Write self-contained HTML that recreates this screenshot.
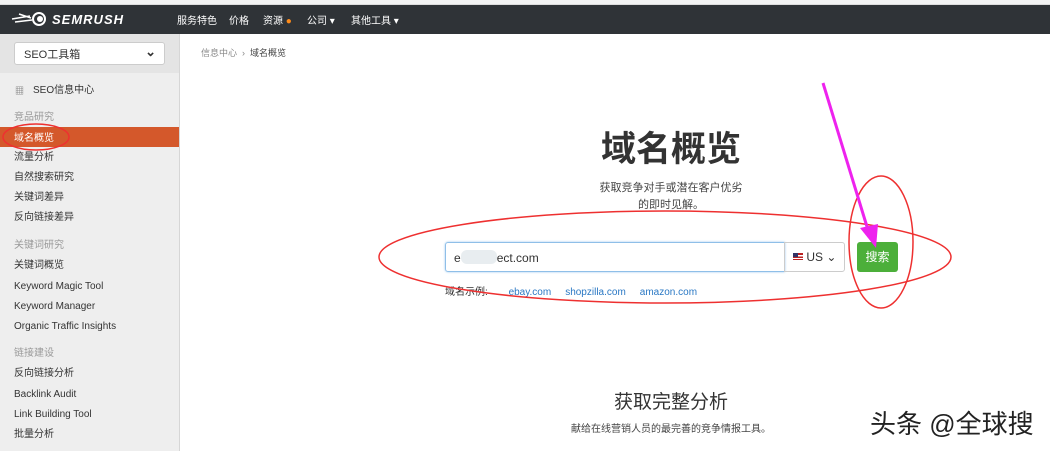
<!DOCTYPE html>
<html><head><meta charset="utf-8"><style>
*{margin:0;padding:0;box-sizing:border-box}
body{width:1050px;height:451px;overflow:hidden;background:#fff;font-family:"Liberation Sans","Noto Sans CJK SC",sans-serif;position:relative;color:#333}
.a{position:absolute;white-space:nowrap}
.top{left:0;top:0;width:1050px;height:5px;background:#f3f3f3;border-bottom:1px solid #ddd}
.hd{left:0;top:5px;width:1050px;height:29px;background:#2f3337}
.nav{top:16px;font-size:10px;line-height:12px;height:12px;color:#fff}
.sb{left:0;top:34px;width:180px;height:417px;background:#eeeeee;border-right:1px solid #d6d6d6}
.sbtop{left:0;top:34px;width:179px;height:39px;background:#e4e4e4}
.it{left:14px;font-size:10px;line-height:12px;height:12px;color:#333}
.gr{left:14px;font-size:10px;line-height:12px;height:12px;color:#999}
</style></head><body>
<div class="a top"></div>
<div class="a hd"></div>
<svg class="a" style="left:10px;top:10px" width="150" height="18">
<path d="M2 9 L20 6 M5 12 L22 10 M9 4 L21 8" stroke="#fff" stroke-width="1.5"/>
<circle cx="29" cy="9" r="6" fill="none" stroke="#fff" stroke-width="2"/><circle cx="30" cy="9" r="3" fill="#fff"/>
<text x="42" y="14" fill="#fff" font-family="Liberation Sans" font-style="italic" font-weight="bold" font-size="13" letter-spacing="1">SEMRUSH</text>
</svg>
<div class="a nav" style="left:177px">服务特色</div>
<div class="a nav" style="left:229px">价格</div>
<div class="a nav" style="left:263px">资源 <span style="color:#ff8c1a">●</span></div>
<div class="a nav" style="left:307px">公司 ▾</div>
<div class="a nav" style="left:351px">其他工具 ▾</div>
<div class="a sb"></div>
<div class="a sbtop"></div>
<div class="a" style="left:14px;top:42px;width:151px;height:23px;background:#fff;border:1px solid #ccc;border-radius:3px;font-size:11px;line-height:13px;padding:6px 9px 0;color:#333">SEO工具箱<span style="position:absolute;right:8px;top:2px;font-size:13px;font-weight:bold">⌄</span></div>
<div class="a it" style="left:15px;top:85px;font-size:9px;color:#777;letter-spacing:-1px">▦</div>
<div class="a it" style="left:33px;top:85px">SEO信息中心</div>
<div class="a gr" style="top:112px">竞品研究</div>
<div class="a" style="left:0;top:127px;width:179px;height:20px;background:#d4582b"></div>
<div class="a it" style="top:133px;color:#fff">域名概览</div>
<div class="a it" style="top:152px">流量分析</div>
<div class="a it" style="top:172px">自然搜索研究</div>
<div class="a it" style="top:192px">关键词差异</div>
<div class="a it" style="top:212px">反向链接差异</div>
<div class="a gr" style="top:240px">关键词研究</div>
<div class="a it" style="top:260px">关键词概览</div>
<div class="a it" style="top:281px">Keyword Magic Tool</div>
<div class="a it" style="top:301px">Keyword Manager</div>
<div class="a it" style="top:321px">Organic Traffic Insights</div>
<div class="a gr" style="top:348px">链接建设</div>
<div class="a it" style="top:368px">反向链接分析</div>
<div class="a it" style="top:389px">Backlink Audit</div>
<div class="a it" style="top:409px">Link Building Tool</div>
<div class="a it" style="top:429px">批量分析</div>
<div class="a" style="left:201px;top:47px;font-size:9px;line-height:12px;color:#888">信息中心 &nbsp;›&nbsp; <span style="color:#444">域名概览</span></div>
<div class="a" style="left:571px;top:130px;width:200px;text-align:center;font-size:35px;line-height:40px;font-weight:bold;color:#333">域名概览</div>
<div class="a" style="left:571px;top:180px;width:200px;text-align:center;font-size:11px;line-height:17px;color:#444;white-space:normal">获取竞争对手或潜在客户优劣<br>的即时见解。</div>
<div class="a" style="left:445px;top:242px;width:340px;height:30px;border:1px solid #8fbfe8;border-radius:3px 0 0 3px;box-shadow:0 0 2px #9cc8ee;font-size:12px;line-height:14px;padding:7px 8px;color:#333">e<span style="display:inline-block;width:36px;height:14px;background:#e8edf0;border-radius:6px;vertical-align:-2px"></span>ect.com</div>
<div class="a" style="left:784px;top:242px;width:61px;height:30px;border:1px solid #ccc;border-radius:0 3px 3px 0;font-size:12px;line-height:14px;padding:7px 8px;color:#333"><span style="display:inline-block;width:10px;height:7px;background:linear-gradient(#b22 0 30%,#fff 30% 50%,#b22 50% 70%,#fff 70% 85%,#b22 85%);position:relative;vertical-align:1px"><span style="position:absolute;left:0;top:0;width:5px;height:4px;background:#336"></span></span> US ⌄</div>
<div class="a" style="left:857px;top:242px;width:41px;height:30px;background:#4caf3a;border-radius:3px;color:#fff;font-size:12px;text-align:center;line-height:30px">搜索</div>
<div class="a" style="left:445px;top:287px;font-size:10px;line-height:12px;color:#333">域名示例: <span style="color:#2a78c4;margin-left:18px">ebay.com</span><span style="color:#2a78c4;margin-left:14px">shopzilla.com</span><span style="color:#2a78c4;margin-left:14px">amazon.com</span></div>
<div class="a" style="left:571px;top:391px;width:200px;text-align:center;font-size:19px;line-height:24px;color:#333">获取完整分析</div>
<div class="a" style="left:521px;top:424px;width:300px;text-align:center;font-size:10px;line-height:12px;color:#444">献给在线营销人员的最完善的竞争情报工具。</div>
<div class="a" style="left:870px;top:408px;font-size:26px;line-height:32px;color:#222;text-shadow:0 0 2px #fff">头条 @全球搜</div>
<svg class="a" style="left:0;top:0" width="1050" height="451">
<g fill="none" stroke="#ee3030" stroke-width="1.5">
<ellipse cx="665" cy="257" rx="286" ry="46"/>
<ellipse cx="881" cy="242" rx="32" ry="66"/>
<ellipse cx="36" cy="137" rx="33" ry="13"/>
</g>
<line x1="823" y1="83" x2="868" y2="230" stroke="#ee22ee" stroke-width="3"/>
<polygon points="860,228 878,224 876,248" fill="#ee22ee"/>
</svg>
</body></html>
